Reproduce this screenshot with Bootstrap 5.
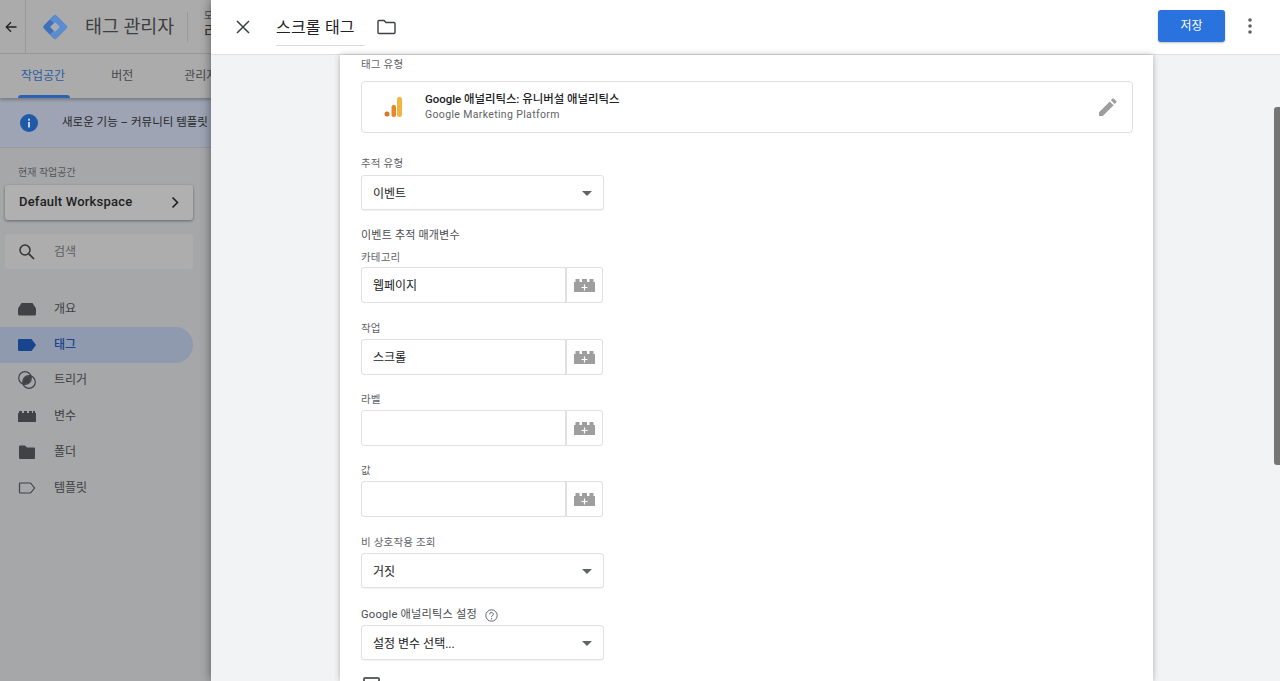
<!DOCTYPE html>
<html lang="ko">
<head>
<meta charset="utf-8">
<title>태그 관리자</title>
<link href="https://cdn.jsdelivr.net/npm/bootstrap@5.3.0/dist/css/bootstrap.min.css" rel="stylesheet">
<style>
html,body{height:100%;overflow:hidden}
body{font-family:Roboto,"Noto Sans CJK KR",sans-serif;background:#a6a7a9;color:#202124;font-size:12px}
.app-root{height:681px;overflow:hidden}
.back-head{height:54px;background:#ababab;border-bottom:1px solid #999;white-space:nowrap}
.back-btn{width:26px;height:54px;border-right:1px solid #999;padding-right:4px}
.back-logo{margin-left:15px;margin-right:16px}
.back-title{font-size:18.4px;color:#3c3e40;width:103px;border-right:1px solid #999;line-height:30px}
.back-acct{margin-left:16px;line-height:1;margin-top:-3px}
.back-acct-sm{font-size:10px;color:#444;margin-bottom:3px}
.back-acct-lg{font-size:16px;color:#333}
.back-tabs{height:44px;background:#ababab;box-shadow:0 2px 3px rgba(0,0,0,.25);position:relative;white-space:nowrap}
.back-tab{font-size:12px;color:#45484b;height:44px;line-height:44px}
.tab-first{margin-left:21px;color:#2c5ca3;position:relative}
.tab-first::after{content:"";position:absolute;left:-3px;right:-5px;bottom:0;height:3px;background:#2c62b0;border-radius:3px 3px 0 0}
.tab-second{margin-left:46px}
.tab-third{margin-left:51px}
.back-notice{height:50px;background:#9ea4b3;border-bottom:1px solid #979a9e;white-space:nowrap;padding-left:20px}
.notice-text{margin-left:24px;font-size:11.5px;color:#26282b}
.side-label{font-size:10px;color:#54575a;margin:18px 0 0 18px;line-height:14px}
.side-box{margin:5px 18px 0 5px;width:188px;height:35px;border-radius:3px;padding:0 13px 0 14px}
.box-ws{background:#b0b0b0;box-shadow:0 1px 3px rgba(0,0,0,.4);font-size:13px;font-weight:500;color:#1e1f21;letter-spacing:.2px;padding-bottom:1px}
.box-search{background:#adadad;margin-top:14px;color:#5c5f62;font-size:12px;padding-left:13px;gap:18px}
.side-nav{margin-top:22px}
.side-item{height:35.8px;width:193px;padding-left:18px;color:#3c3f42;font-size:12px;gap:18px;border-radius:0 18px 18px 0}
.side-item svg{flex:none}
.side-on{background:#8f9aaf;color:#17448c;font-weight:500}
.side-col{width:211px;height:681px;overflow:hidden}
.sheet{position:absolute;left:211px;top:0;right:0;bottom:0;background:#f1f3f4;box-shadow:0 0 10px rgba(0,0,0,.45);overflow:hidden}
.sheet-head{height:55px;background:#fff;border-bottom:1px solid #e0e0e0;padding-left:23px;padding-right:22px;flex:none}
.sheet-name{margin-left:24px;width:89px;height:33px;line-height:30px;font-size:16px;color:#202124;border-bottom:1px solid #dadce0;margin-top:4px;white-space:nowrap;letter-spacing:.2px}
.sheet-folder{margin-left:12px}
.btn-store{width:67px;height:32px;background:#2a72de;border:0;border-radius:3px;color:#fff;font-size:12px;padding:0;box-shadow:0 1px 2px rgba(0,0,0,.25);margin-bottom:2px}
.btn-store:hover{background:#2a72de;color:#fff}
.sheet-dots{margin-left:17px;width:16px;margin-bottom:2px}
.form-paper{width:813px;margin-left:129px;background:#fff;box-shadow:0 0 6px rgba(0,0,0,.28);padding:0 21px;flex:1;overflow:hidden}
.f-label{font-size:10.5px;line-height:16px;padding-top:2px;margin-bottom:2px;color:#5f6368;letter-spacing:.2px}
.f-label-dark{color:#494c50;font-size:11px}
.f-flush{margin-bottom:0}
.f-close{margin-bottom:1px}
.f-far{margin-bottom:3px}
.type-card{height:52px;width:772px;border:1px solid #e0e0e0;border-radius:4px;box-shadow:none;padding-left:22px;padding-right:15px;margin-top:8px;flex-direction:row}
.type-main{margin-left:21px;line-height:16px}
.type-title{font-size:11.4px;color:#202124;font-weight:500}
.type-sub{font-size:10.5px;color:#5f6368;letter-spacing:.35px}
.gap-s{margin-top:21px}
.pick-box{width:243px;height:35px;border:1px solid #dfe1e5;border-radius:3px;padding:2px 11px 0;font-size:12px;color:#202124;box-shadow:0 1px 1px rgba(0,0,0,.06);background:#fff}
.pick-arrow{width:0;height:0;border-left:5px solid transparent;border-right:5px solid transparent;border-top:5px solid #5f6368}
.var-group{width:242px;height:36px;flex-wrap:nowrap}
.var-group .form-control{height:36px;font-size:12px;color:#202124;border-color:#dfe1e5;border-radius:3px 0 0 3px;padding:1px 11px 0;line-height:34px;box-shadow:none;min-height:0}
.var-btn{width:38px;height:36px;padding:0 1px 0 0;border:1px solid #dfe1e5;border-left-width:2px;border-radius:0 3px 3px 0;background:#fff;margin-left:-1px}
.var-btn:hover{background:#fff}
.gap-m{margin-top:15px}
.gap-l{margin-top:17px}
.help-ico{margin-left:8px}
.f-label-wide{font-size:11.2px}
.tick-box{width:17px;height:17px;border:2px solid #5f6368;border-radius:2px;margin-left:2px;flex:none}
.scroll-thumb{position:absolute;right:0;top:107px;width:6px;height:358px;background:#757575;border-radius:3px 0 0 3px}
</style>
</head>
<body>
<div class="app-root d-flex">
  <div class="side-col d-flex flex-column flex-shrink-0">
    <div class="back-head d-flex align-items-center">
      <div class="back-btn d-flex align-items-center justify-content-center flex-shrink-0">
        <svg width="14" height="14" viewBox="0 0 14 14"><path d="M12.5 7H2.5M7 2.3 2.3 7 7 11.7" fill="none" stroke="#222" stroke-width="1.3"/></svg>
      </div>
      <svg class="back-logo flex-shrink-0" width="28" height="28" viewBox="0 0 28 28">
        <rect x="5" y="5" width="18" height="18" rx="2.5" transform="rotate(45 14 14)" fill="#3f70ba"/>
        <path d="M14.2 1.4 26.6 13.8a1.6 1.6 0 0 1 0 .5L14.2 26.6 9 21.4 16.4 14 9 6.6Z" fill="#5b8ccf"/>
        <rect x="10.5" y="10.5" width="7" height="7" rx="1" transform="rotate(45 14 14)" fill="#a9adb3"/>
      </svg>
      <div class="back-title flex-shrink-0">태그 관리자</div>
      <div class="back-acct flex-shrink-0">
        <div class="back-acct-sm">모든 계정</div>
        <div class="back-acct-lg">라이브러리</div>
      </div>
    </div>
    <div class="back-tabs d-flex">
      <div class="back-tab tab-first">작업공간</div>
      <div class="back-tab tab-second">버전</div>
      <div class="back-tab tab-third">관리자</div>
    </div>
    <div class="back-notice d-flex align-items-center">
      <svg class="flex-shrink-0" width="18" height="18" viewBox="0 0 18 18"><circle cx="9" cy="9" r="9" fill="#1f5aa8"/><rect x="8" y="8" width="2" height="5.5" fill="#c6cede"/><rect x="8" y="4.7" width="2" height="2" fill="#c6cede"/></svg>
      <div class="notice-text">새로운 기능 – 커뮤니티 템플릿 갤러리</div>
    </div>
    <div class="side-label">현재 작업공간</div>
    <div class="side-box box-ws d-flex align-items-center justify-content-between">
      <span>Default Workspace</span>
      <svg width="9" height="13" viewBox="0 0 9 13"><path d="M1.5 1.5 6.5 6.5 1.5 11.5" fill="none" stroke="#1e1f21" stroke-width="1.6"/></svg>
    </div>
    <div class="side-box box-search d-flex align-items-center">
      <svg width="18" height="18" viewBox="0 0 18 18"><circle cx="7" cy="7" r="5" fill="none" stroke="#333" stroke-width="1.5"/><path d="M10.8 10.8 16 16" stroke="#333" stroke-width="1.7"/></svg>
      <span>검색</span>
    </div>
    <div class="side-nav">
      <div class="side-item d-flex align-items-center">
        <svg width="18" height="14" viewBox="0 0 18 14"><path d="M3.5 1h11L18 6.5V12a1.5 1.5 0 0 1-1.5 1.5h-15A1.500 1.500 0 0 1 0 12V6.500Z" fill="#404346"/></svg>
        <span>개요</span>
      </div>
      <div class="side-item side-on d-flex align-items-center">
        <svg width="18" height="12" viewBox="0 0 18 12"><path d="M0 1a1 1 0 0 1 1-1h12.500L18 6l-4.500 6H1a1 1 0 0 1-1-1Z" fill="#17448c"/></svg>
        <span>태그</span>
      </div>
      <div class="side-item d-flex align-items-center">
        <svg width="18" height="18" viewBox="0 0 18 18"><circle cx="7" cy="7" r="6.300" fill="none" stroke="#404346" stroke-width="1.200"/><circle cx="11" cy="11" r="6.300" fill="none" stroke="#404346" stroke-width="1.200"/><path d="M12.800 5.200A6.300 6.300 0 0 1 5.200 12.800 6.300 6.300 0 0 1 12.800 5.200Z" fill="#404346"/></svg>
        <span>트리거</span>
      </div>
      <div class="side-item d-flex align-items-center">
        <svg width="18" height="11" viewBox="0 0 18 11"><path d="M0 2h1V0h3v2h2V0h3v2h2V0h3v2h1V0h2v2h1v9H0Z" fill="#404346"/></svg>
        <span>변수</span>
      </div>
      <div class="side-item d-flex align-items-center">
        <svg width="18" height="14" viewBox="0 0 18 14"><path d="M1 1.500a1 1 0 0 1 1-1h5l2 2h7a1 1 0 0 1 1 1V13a1 1 0 0 1-1 1H2a1 1 0 0 1-1-1Z" fill="#404346"/></svg>
        <span>폴더</span>
      </div>
      <div class="side-item d-flex align-items-center">
        <svg width="18" height="12" viewBox="0 0 18 12"><path d="M2.500 1h10L16.500 6l-4 5h-10a1 1 0 0 1-1-1V2a1 1 0 0 1 1-1Z" fill="none" stroke="#404346" stroke-width="1.200"/></svg>
        <span>템플릿</span>
      </div>
    </div>
  </div>
</div>

<div class="sheet d-flex flex-column">
  <div class="sheet-head d-flex align-items-center">
    <svg width="18" height="18" viewBox="0 0 18 18"><path d="M3 3 15 15M15 3 3 15" stroke="#3c4043" stroke-width="1.500"/></svg>
    <div class="sheet-name">스크롤 태그</div>
    <svg class="sheet-folder" width="19" height="16" viewBox="0 0 19 16"><path d="M1 2.500a1 1 0 0 1 1-1h5l2 2h8a1 1 0 0 1 1 1V13.500a1 1 0 0 1-1 1H2a1 1 0 0 1-1-1Z" fill="none" stroke="#3c4043" stroke-width="1.400"/></svg>
    <div class="ms-auto d-flex align-items-center">
      <button type="button" class="btn btn-store">저장</button>
      <svg class="sheet-dots" width="16" height="18" viewBox="0 0 16 18"><circle cx="8" cy="3" r="1.800" fill="#5f6368"/><circle cx="8" cy="9" r="1.800" fill="#5f6368"/><circle cx="8" cy="15" r="1.800" fill="#5f6368"/></svg>
    </div>
  </div>
  <div class="form-paper">
    <div class="f-label">태그 유형</div>
    <div class="card type-card d-flex align-items-center">
      <svg class="flex-shrink-0" width="20" height="22" viewBox="0 0 20 22"><circle cx="3" cy="18" r="2.500" fill="#d9772a"/><rect x="7.500" y="9" width="4.500" height="12" rx="2" fill="#e8872a"/><rect x="13" y="1" width="5" height="20" rx="2.200" fill="#f4b440"/></svg>
      <div class="type-main">
        <div class="type-title">Google 애널리틱스: 유니버설 애널리틱스</div>
        <div class="type-sub">Google Marketing Platform</div>
      </div>
      <svg class="ms-auto" width="18" height="18" viewBox="0 0 18 18"><path d="M0 18V14.200L10.800 3.400 14.600 7.200 3.800 18ZM11.900 2.300 13.500.7a1 1 0 0 1 1.400 0L17.300 3.100a1 1 0 0 1 0 1.400L15.700 6.100Z" fill="#9e9e9e"/></svg>
    </div>

    <div class="f-label gap-s f-far">추적 유형</div>
    <div class="pick-box d-flex align-items-center justify-content-between"><span>이벤트</span><i class="pick-arrow"></i></div>

    <div class="f-label f-label-dark mt-3 f-flush">이벤트 추적 매개변수</div>
    <div class="f-label mt-1 f-close">카테고리</div>
    <div class="input-group var-group">
      <div class="form-control">웹페이지</div>
      <button type="button" class="btn var-btn" aria-label="변수"><svg width="21" height="13" viewBox="0 0 21 13"><path d="M0 3h1.500V0h4v3h2.500V0h5v3h2.500V0h4v3H21v10H0Z" fill="#9e9e9e"/><path d="M10.500 5.500v6M7.500 8.500h6" stroke="#fff" stroke-width="1.200"/></svg></button>
    </div>

    <div class="f-label mt-3">작업</div>
    <div class="input-group var-group">
      <div class="form-control">스크롤</div>
      <button type="button" class="btn var-btn" aria-label="변수"><svg width="21" height="13" viewBox="0 0 21 13"><path d="M0 3h1.500V0h4v3h2.500V0h5v3h2.500V0h4v3H21v10H0Z" fill="#9e9e9e"/><path d="M10.500 5.500v6M7.500 8.500h6" stroke="#fff" stroke-width="1.200"/></svg></button>
    </div>

    <div class="f-label gap-m">라벨</div>
    <div class="input-group var-group">
      <div class="form-control"></div>
      <button type="button" class="btn var-btn" aria-label="변수"><svg width="21" height="13" viewBox="0 0 21 13"><path d="M0 3h1.500V0h4v3h2.500V0h5v3h2.500V0h4v3H21v10H0Z" fill="#9e9e9e"/><path d="M10.500 5.500v6M7.500 8.500h6" stroke="#fff" stroke-width="1.200"/></svg></button>
    </div>

    <div class="f-label gap-m">값</div>
    <div class="input-group var-group">
      <div class="form-control"></div>
      <button type="button" class="btn var-btn" aria-label="변수"><svg width="21" height="13" viewBox="0 0 21 13"><path d="M0 3h1.500V0h4v3h2.500V0h5v3h2.500V0h4v3H21v10H0Z" fill="#9e9e9e"/><path d="M10.500 5.500v6M7.500 8.500h6" stroke="#fff" stroke-width="1.200"/></svg></button>
    </div>

    <div class="f-label mt-3">비 상호작용 조회</div>
    <div class="pick-box d-flex align-items-center justify-content-between"><span>거짓</span><i class="pick-arrow"></i></div>

    <div class="f-label f-label-dark f-label-wide gap-l d-flex align-items-center">Google 애널리틱스 설정
      <svg class="help-ico" width="13" height="13" viewBox="0 0 13 13"><circle cx="6.500" cy="6.500" r="5.700" fill="none" stroke="#5f6368" stroke-width="1"/><path d="M4.700 5.200a1.800 1.800 0 1 1 2.700 1.500c-.6.400-.9.700-.9 1.300" fill="none" stroke="#5f6368" stroke-width="1"/><circle cx="6.500" cy="9.700" r=".7" fill="#5f6368"/></svg>
    </div>
    <div class="pick-box d-flex align-items-center justify-content-between"><span>설정 변수 선택...</span><i class="pick-arrow"></i></div>

    <div class="tick-box gap-l"></div>
  </div>
  <div class="scroll-thumb"></div>
</div>
<script src="https://cdn.jsdelivr.net/npm/bootstrap@5.3.0/dist/js/bootstrap.bundle.min.js"></script>
</body>
</html>
